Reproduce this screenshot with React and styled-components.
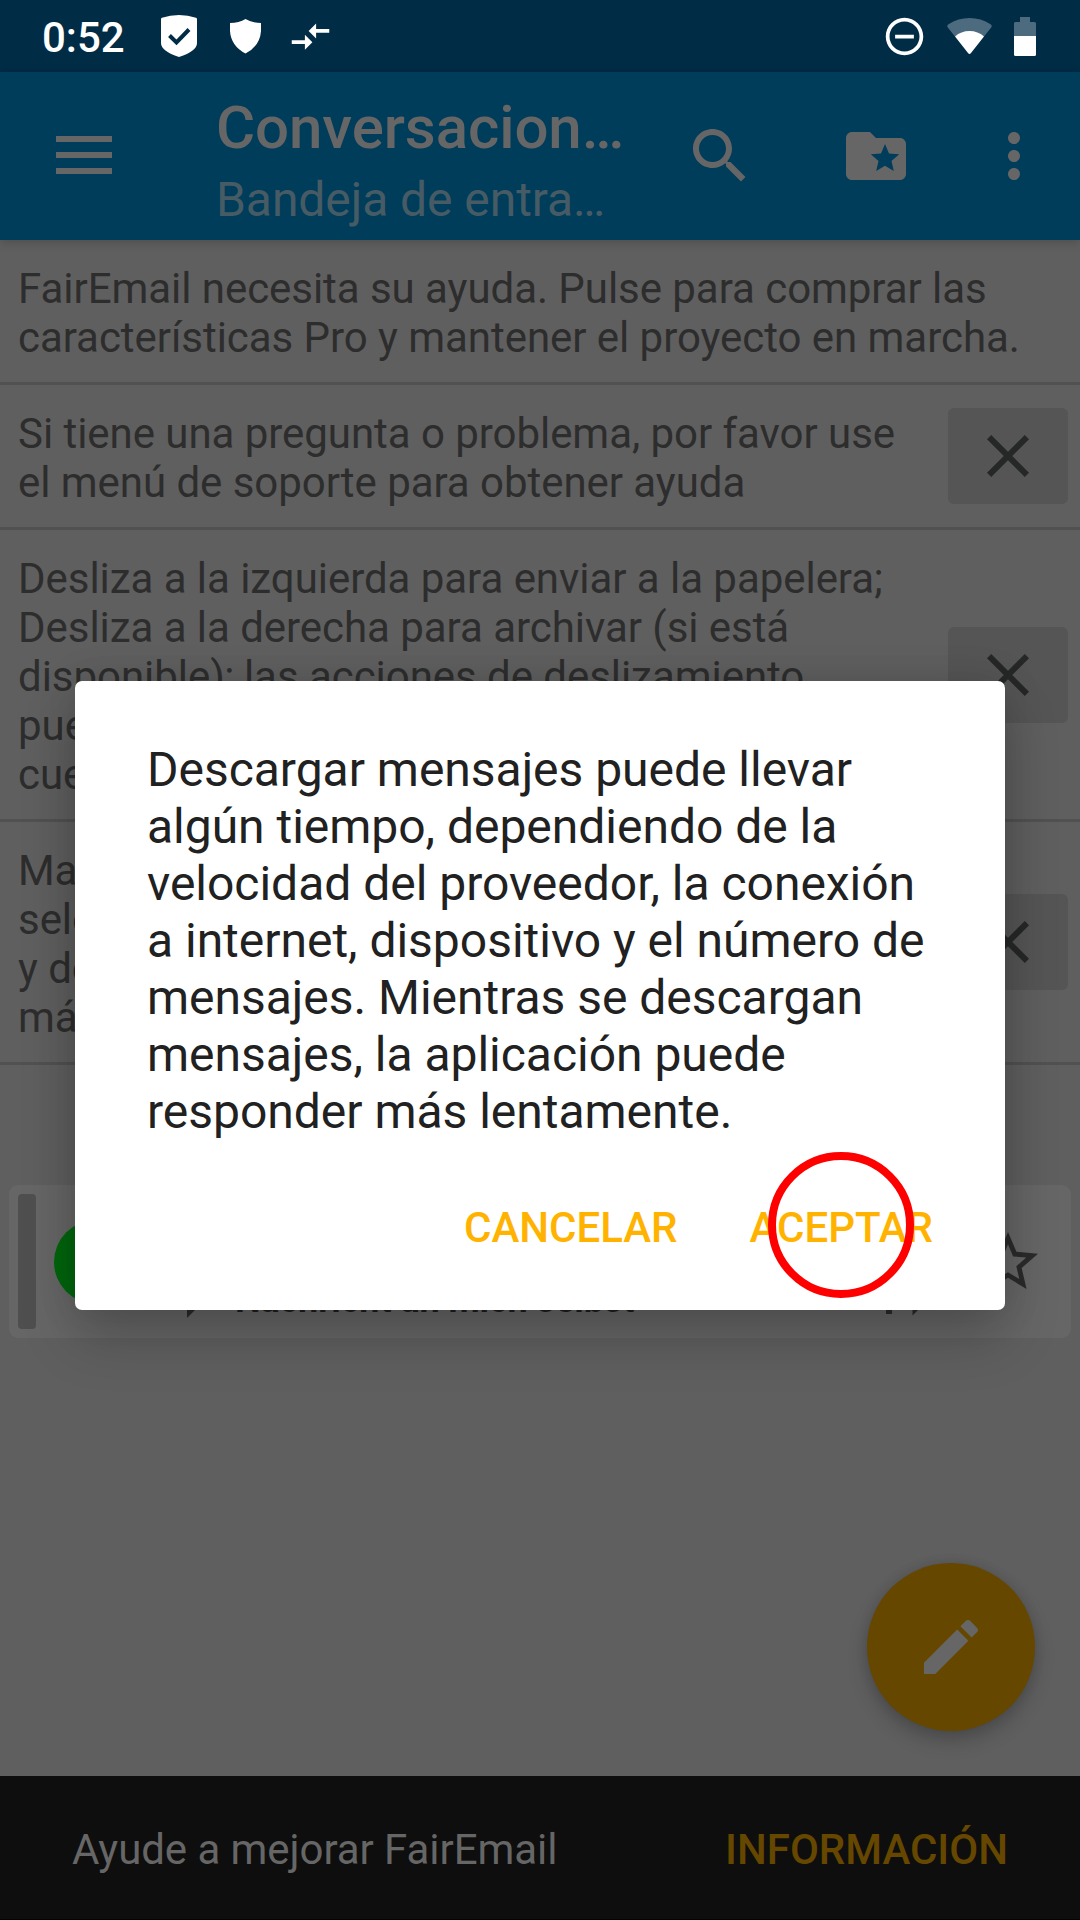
import React from "react";
import styled, { createGlobalStyle } from "styled-components";

const Global = createGlobalStyle`
  * { box-sizing: border-box; }
  html, body { margin: 0; padding: 0; background: #5f5f5f; }
  body { font-family: Roboto, "Noto Sans", sans-serif; }
  svg { display: block; flex: none; }
  button { font: inherit; border: 0; margin: 0; padding: 0; background: none; }
`;

const Screen = styled.div`
  position: relative;
  width: 1080px;
  height: 1920px;
  overflow: hidden;
  display: flex;
  flex-direction: column;
  background: #5f5f5f;
`;

const StatusBar = styled.header`
  flex: none;
  height: 72px;
  padding: 0 44px 0 42px;
  display: flex;
  align-items: center;
  background: #012c46;
  color: #fff;
`;

const Clock = styled.span`
  font-size: 42px;
  font-weight: 500;
  line-height: 49px;
  width: 118px;
  padding-top: 2px;
`;

const Spacer = styled.div`
  flex: 1;
`;

const StatusIcon = styled.svg`
  margin-left: ${(p) => p.$gap || 0}px;
  fill: currentColor;
`;

const Toolbar = styled.nav`
  flex: none;
  position: relative;
  height: 168px;
  padding: 0 30px 0 48px;
  display: flex;
  align-items: center;
  background: #003d5b;
  color: #666;
  box-shadow: 0 2px 10px rgba(0, 0, 0, 0.2);
`;

const Titles = styled.div`
  width: 432px;
  margin-left: 96px;
  padding-top: 9px;
  white-space: nowrap;
`;

const Title = styled.h1`
  margin: 0;
  font-size: 60px;
  font-weight: 500;
  line-height: 70px;
  letter-spacing: -0.08px;
`;

const Subtitle = styled.div`
  font-size: 48px;
  line-height: 56px;
  margin-top: 9px;
  letter-spacing: -0.06px;
  color: #475b65;
`;

const IconButton = styled.button`
  width: 72px;
  height: 72px;
  margin-left: ${(p) => p.$gap || 0}px;
  color: inherit;
  & > svg { fill: currentColor; }
`;

const Hint = styled.section`
  flex: none;
  display: flex;
  align-items: center;
  justify-content: space-between;
  padding-right: 12px;
  border-bottom: 3px solid #515151;
`;

const HintText = styled.p`
  margin: 0;
  padding: 24px 0 20px 18px;
  font-size: 42px;
  line-height: 49px;
  letter-spacing: -0.045px;
  color: #2d2d2d;
  white-space: pre-line;
`;

const CloseButton = styled.button`
  flex: none;
  width: 120px;
  height: 96px;
  display: flex;
  align-items: center;
  justify-content: center;
  border-radius: 6px;
  background: #555;
  color: #262827;
  & > svg { fill: currentColor; }
`;

const MessageCard = styled.article`
  flex: none;
  margin: 120px 9px 0;
  height: 153px;
  padding: 9px;
  display: flex;
  align-items: center;
  border-radius: 9px;
  background: #666;
  color: #2b2b2b;
`;

const ColorStripe = styled.div`
  width: 18px;
  height: 135px;
  border-radius: 4px;
  background: #4f4f4f;
`;

const Avatar = styled.div`
  width: 84px;
  height: 84px;
  margin-left: 18px;
  border-radius: 50%;
  background: #00660d;
`;

const MessageLine = styled.div`
  flex: 1;
  align-self: flex-end;
  display: flex;
  align-items: flex-end;
  margin: 0 0 4px 45px;
`;

const LineIcon = styled.svg`
  margin: 0 0 ${(p) => p.$lift}px ${(p) => p.$gap || 0}px;
  fill: currentColor;
`;

const Subject = styled.div`
  width: 651px;
  margin: 0 0 4px 4px;
  font-size: 36px;
  line-height: 42px;
  font-weight: 700;
  letter-spacing: -0.1px;
  white-space: nowrap;
  color: #1e1e1e;
`;

const StarButton = styled.button`
  width: 72px;
  height: 72px;
  margin-right: 18px;
  color: inherit;
  & > svg { fill: currentColor; }
`;

const Fab = styled.button`
  position: absolute;
  right: 45px;
  top: 1563px;
  width: 168px;
  height: 168px;
  border-radius: 50%;
  display: flex;
  align-items: center;
  justify-content: center;
  background: #664700;
  color: #666;
  box-shadow: 0 10px 20px rgba(0, 0, 0, 0.2), 0 0 12px rgba(0, 0, 0, 0.1);
  & > svg { fill: currentColor; }
`;

const Snackbar = styled.footer`
  flex: none;
  height: 144px;
  margin-top: auto;
  padding: 3px 72px 0;
  display: flex;
  align-items: center;
  justify-content: space-between;
  border-bottom: 1px solid #000;
  background: #0e0e0e;
  color: #666;
  font-size: 42px;
  line-height: 49px;
`;

const SnackText = styled.span`
  letter-spacing: -0.06px;
`;

const SnackAction = styled.button`
  color: #664700;
  font-weight: 500;
`;

const Dialog = styled.div`
  position: absolute;
  left: 75px;
  top: 681px;
  width: 930px;
  height: 629px;
  padding: 60px 72px 0;
  display: flex;
  flex-direction: column;
  border-radius: 7px;
  background: #fff;
  box-shadow: 0 28px 56px rgba(0, 0, 0, 0.2), 0 0 40px rgba(0, 0, 0, 0.12);
`;

const DialogText = styled.p`
  margin: 0;
  font-size: 48px;
  line-height: 57px;
  letter-spacing: -0.02px;
  color: #212121;
  white-space: pre-line;
`;

const DialogActions = styled.div`
  display: flex;
  justify-content: flex-end;
  gap: 72px;
  margin-top: 63px;
`;

const DialogButton = styled.button`
  font-size: 42px;
  font-weight: 500;
  line-height: 49px;
  color: #ffb300;
`;

const TapMarker = styled.div`
  position: absolute;
  left: 768px;
  top: 1152px;
  width: 146px;
  height: 146px;
  border: 8px solid #f00;
  border-radius: 50%;
`;

const paths = {
  search:
    "M15.5 14h-.79l-.28-.27C15.41 12.59 16 11.11 16 9.5 16 5.91 13.09 3 9.5 3S3 5.91 3 9.5 5.91 16 9.5 16c1.61 0 3.09-.59 4.23-1.57l.27.28v.79l5 4.99L20.49 19l-4.99-5zm-6 0C7.01 14 5 11.99 5 9.5S7.01 5 9.5 5 14 7.01 14 9.5 11.99 14 9.5 14z",
  folder:
    "M20 6h-8l-2-2H4c-1.1 0-1.99.9-1.99 2L2 18c0 1.1.9 2 2 2h16c1.1 0 2-.9 2-2V8c0-1.1-.9-2-2-2zm-2.06 11L15 15.28 12.06 17l.78-3.33-2.59-2.24 3.41-.29L15 8l1.34 3.14 3.41.29-2.59 2.24.78 3.33z",
  more:
    "M12 8c1.1 0 2-.9 2-2s-.9-2-2-2-2 .9-2 2 .9 2 2 2zm0 2c-1.1 0-2 .9-2 2s.9 2 2 2 2-.9 2-2-.9-2-2-2zm0 6c-1.1 0-2 .9-2 2s.9 2 2 2 2-.9 2-2-.9-2-2-2z",
  close:
    "M19 6.41L17.59 5 12 10.59 6.41 5 5 6.41 10.59 12 5 17.59 6.41 19 12 13.41 17.59 19 19 17.59 13.41 12z",
  edit:
    "M3 17.25V21h3.75L17.81 9.94l-3.75-3.75L3 17.25zM20.71 7.04c.39-.39.39-1.02 0-1.41l-2.34-2.34c-.39-.39-1.02-.39-1.41 0l-1.83 1.83 3.75 3.75 1.83-1.83z",
  star:
    "M22 9.24l-7.19-.62L12 2 9.19 8.63 2 9.24l5.46 4.73L5.82 21 12 17.27 18.18 21l-1.63-7.03L22 9.24zM12 15.4l-3.76 2.27 1-4.28-3.32-2.88 4.38-.38L12 6.1l1.71 4.04 4.38.38-3.32 2.88 1 4.28L12 15.4z",
  arrows:
    "M9.01 14H2v2h7.01v3L13 15l-3.99-4v3zm5.98-1v-3H22V8h-7.01V5L11 9l3.99 4z",
  dnd:
    "M7 11v2h10v-2H7zm5-9C6.48 2 2 6.48 2 12s4.48 10 10 10 10-4.48 10-10S17.52 2 12 2zm0 18c-4.41 0-8-3.59-8-8s3.59-8 8-8 8 3.59 8 8-3.59 8-8 8z",
  bubble:
    "M20 2H4c-1.1 0-2 .9-2 2v18l4-4h14c1.1 0 2-.9 2-2V4c0-1.1-.9-2-2-2z",
};

const Icon = ({ name, size = 72 }) => (
  <svg width={size} height={size} viewBox="0 0 24 24">
    <path d={paths[name]} />
  </svg>
);

const hints = [
  {
    text: "FairEmail necesita su ayuda. Pulse para comprar las\ncaracterísticas Pro y mantener el proyecto en marcha.",
  },
  {
    text: "Si tiene una pregunta o problema, por favor use\nel menú de soporte para obtener ayuda",
    closable: true,
  },
  {
    text: "Desliza a la izquierda para enviar a la papelera;\nDesliza a la derecha para archivar (si está\ndisponible); las acciones de deslizamiento\npueden configurarse en los ajustes de la\ncuenta",
    closable: true,
  },
  {
    text: "Mantenga pulsado un mensaje para\nseleccionar varios mensajes, mantenga\ny deslice hacia arriba o abajo para elegir\nmás",
    closable: true,
  },
];

export default function App() {
  return (
    <Screen>
      <Global />
      <StatusBar>
        <Clock>0:52</Clock>
        <StatusIcon width="38" height="44" viewBox="0 0 38 44">
          <path d="M1 5Q1 4 2 3.7Q10 1 19 1Q28 1 36 3.7Q37 4 37 5V29Q37 37 19 43Q1 37 1 29Z" />
          <path d="M9.5 21.5L16.5 28.5L29 15.5" fill="none" stroke="#012c46" strokeWidth="4" />
        </StatusIcon>
        <StatusIcon $gap={31} width="33" height="36" viewBox="0 0 33 36">
          <path d="M1 5Q10 5 16.5 1Q23 5 32 5V13Q31 28 16.5 35.5Q2 28 1 13Z" />
        </StatusIcon>
        <StatusIcon $gap={26} width="45" height="45" viewBox="0 0 24 24">
          <path d={paths.arrows} />
        </StatusIcon>
        <Spacer />
        <StatusIcon width="45" height="45" viewBox="0 0 24 24">
          <path d={paths.dnd} />
        </StatusIcon>
        <StatusIcon $gap={20} width="45" height="38" viewBox="0 0 45 38">
          <path d="M0.8 10.5Q-0.5 8.5 1.5 7.2Q11 1 22.5 1Q34 1 43.5 7.2Q45.5 8.5 44.2 10.5L37 19.5H8Z" fill="#4d6b7e" />
          <path d="M8 19.5Q14 14 22.5 14Q31 14 37 19.5L24 36Q22.5 38 21 36Z" />
        </StatusIcon>
        <StatusIcon $gap={22} width="22" height="39" viewBox="0 0 22 39">
          <path d="M6 0H16V5H20.5Q22 5 22 6.5V19H0V6.5Q0 5 1.5 5H6Z" fill="#4d6b7e" />
          <path d="M0 19H22V37.5Q22 39 20.5 39H1.5Q0 39 0 37.5Z" />
        </StatusIcon>
      </StatusBar>

      <Toolbar>
        <IconButton aria-label="menu">
          <svg width="72" height="72" viewBox="0 0 72 72">
            <path d="M8 16h56v6H8zM8 32h56v6H8zM8 48h56v6H8z" />
          </svg>
        </IconButton>
        <Titles>
          <Title>Conversacion…</Title>
          <Subtitle>Bandeja de entra…</Subtitle>
        </Titles>
        <IconButton $gap={36}><Icon name="search" /></IconButton>
        <IconButton $gap={84}><Icon name="folder" /></IconButton>
        <IconButton $gap={66}><Icon name="more" /></IconButton>
      </Toolbar>

      {hints.map((h) => (
        <Hint key={h.text}>
          <HintText>{h.text}</HintText>
          {h.closable && (
            <CloseButton><Icon name="close" /></CloseButton>
          )}
        </Hint>
      ))}

      <MessageCard>
        <ColorStripe />
        <Avatar />
        <MessageLine>
          <LineIcon $lift={3} width="48" height="48" viewBox="0 0 24 24">
            <path d={paths.bubble} />
          </LineIcon>
          <Subject>Nachricht an mich selbst</Subject>
          <LineIcon $lift={11} width="6" height="20" viewBox="0 0 6 20">
            <path d="M0 0h6v20H0z" />
          </LineIcon>
          <LineIcon $lift={6} $gap={17} width="42" height="42" viewBox="0 0 24 24">
            <path d={paths.bubble} />
          </LineIcon>
        </MessageLine>
        <StarButton><Icon name="star" /></StarButton>
      </MessageCard>

      <Snackbar>
        <SnackText>Ayude a mejorar FairEmail</SnackText>
        <SnackAction>INFORMACIÓN</SnackAction>
      </Snackbar>

      <Fab><Icon name="edit" /></Fab>

      <Dialog role="dialog">
        <DialogText>
          {"Descargar mensajes puede llevar\nalgún tiempo, dependiendo de la\nvelocidad del proveedor, la conexión\na internet, dispositivo y el número de\nmensajes. Mientras se descargan\nmensajes, la aplicación puede\nresponder más lentamente."}
        </DialogText>
        <DialogActions>
          <DialogButton>CANCELAR</DialogButton>
          <DialogButton>ACEPTAR</DialogButton>
        </DialogActions>
      </Dialog>
      <TapMarker />
    </Screen>
  );
}
